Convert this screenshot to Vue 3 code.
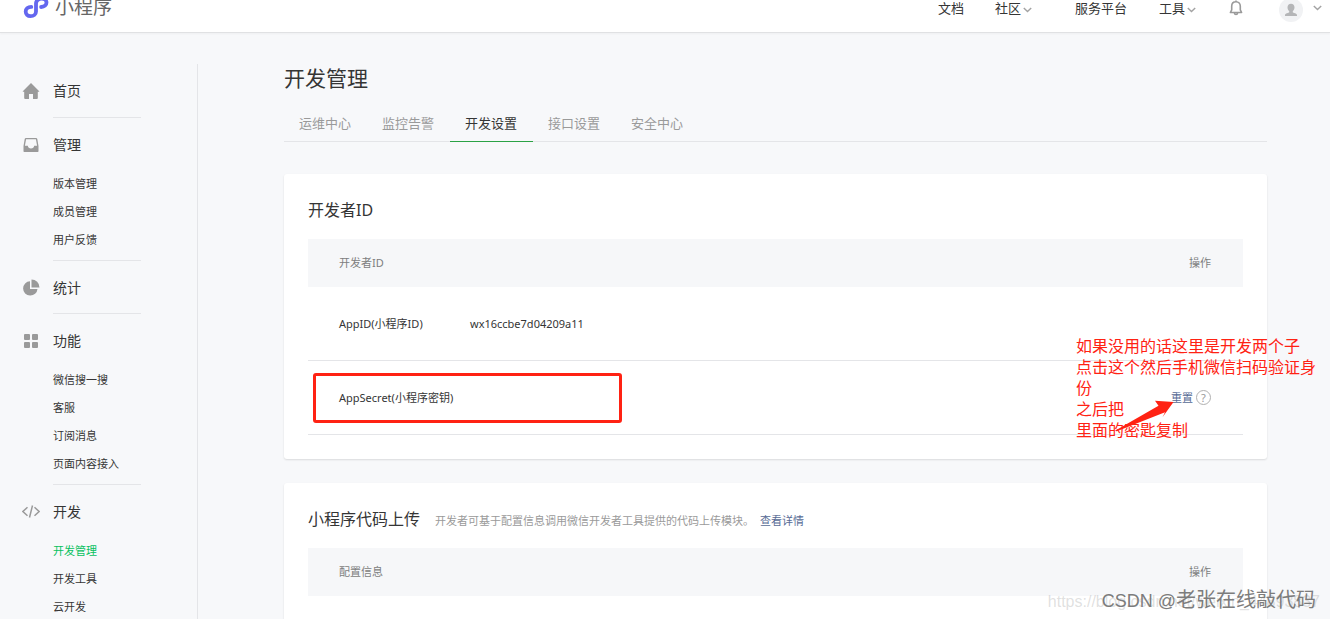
<script setup>
const groups = [
  { title: '首页', icon: 'home', items: [] },
  { title: '管理', icon: 'tray', items: ['版本管理', '成员管理', '用户反馈'] },
  { title: '统计', icon: 'pie', items: [] },
  { title: '功能', icon: 'grid', items: ['微信搜一搜', '客服', '订阅消息', '页面内容接入'] },
  { title: '开发', icon: 'code', items: ['开发管理', '开发工具', '云开发'] },
]
const activeItem = '开发管理'
const tabs = ['运维中心', '监控告警', '开发设置', '接口设置', '安全中心']
const activeTab = '开发设置'
</script>

<template>
  <div class="page">
    <header class="topbar">
      <a class="brand" href="#">
        <svg class="brand-icon" viewBox="0 0 26 20" aria-hidden="true">
          <path d="M8.3 6.9C4.8 6.9 2.700 8.900 2.700 11.600c0 2.600 1.900 4.600 4.800 4.600 3.200 0 5.500-2 5.500-4.800V3.500C13 .7 15.500-1.500 18.700-1.500c2.900 0 4.800 2 4.800 4.100 0 2.400-2 4.300-5.400 4.400" />
        </svg>
        <span>小程序</span>
      </a>
      <nav class="topnav">
        <a class="nav-docs" href="#">文档</a>
        <a class="nav-community" href="#">社区<svg class="chevron" viewBox="0 0 9 6"><path d="M.8.9 4.500 4.600 8.200.9" /></svg></a>
        <a class="nav-platform" href="#">服务平台</a>
        <a class="nav-tools" href="#">工具<svg class="chevron" viewBox="0 0 9 6"><path d="M.8.9 4.500 4.600 8.200.9" /></svg></a>
        <button class="bell" type="button" aria-label="通知">
          <svg viewBox="0 0 14 16"><path d="M7 1.800c-2.700 0-4.300 2-4.300 4.500v3.500L1.400 12.500h11.200l-1.300-2.700V6.300c0-2.500-1.600-4.500-4.300-4.500zM7 .5v1.300M5.300 12.800c.2 1.200.8 1.700 1.700 1.700s1.500-.5 1.700-1.700" /></svg>
        </button>
        <button class="account" type="button" aria-label="账号">
          <svg class="avatar" viewBox="0 0 24 24">
            <circle cx="12" cy="12" r="12" fill="#f1f2f4" />
            <path fill="#b4b5b7" d="M12 5.800c2.200 0 3.500 1.500 3.500 3.600 0 1.500-.7 2.900-1.700 3.600v1.200c.3.700 4.200 1.100 4.200 2.700V18H6v-1.100c0-1.600 3.900-2 4.200-2.700V13c-1-.7-1.700-2.100-1.700-3.600 0-2.100 1.300-3.600 3.500-3.600z" />
          </svg>
          <svg class="chevron" viewBox="0 0 9 6"><path d="M.8.9 4.500 4.600 8.200.9" /></svg>
        </button>
      </nav>
    </header>

    <div class="body">
      <aside class="sidebar">
        <section v-for="g in groups" :key="g.title" class="group">
          <a class="group-title" href="#">
            <svg class="group-icon" viewBox="0 0 18 18" aria-hidden="true">
              <path v-if="g.icon === 'home'" d="M9 1 .8 9.200c-.2.3 0 .6.300.6H2.200V16c0 .6.300 1 .9 1H7v-5h4v5h3.900c.6 0 .9-.4.9-1V9.800h1.100c.3 0 .5-.3.300-.6z" />
              <path v-else-if="g.icon === 'tray'" fill-rule="evenodd" d="M4 2h10c.7 0 1.100.4 1.300 1l1.200 7v5c0 .7-.3 1-1 1h-13c-.7 0-1-.3-1-1v-5l1.200-7C2.900 2.400 3.300 2 4 2zm.1 1.200L2.900 9.700h2.900c.3 1.700 1.400 2.800 3.200 2.800s2.900-1.100 3.200-2.800h2.900l-1.200-6.500z" />
              <template v-else-if="g.icon === 'pie'">
                <path d="M8 2.200V10h7.500A7.200 7.200 0 1 1 8 2.200z" />
                <path d="M9.500.5a8 8 0 0 1 8 8h-8z" />
              </template>
              <template v-else-if="g.icon === 'grid'">
                <rect x="2" y="2" width="6" height="6" rx="1" />
                <rect x="10" y="2" width="6" height="6" rx="1" />
                <rect x="2" y="10" width="6" height="6" rx="1" />
                <rect x="10" y="10" width="6" height="6" rx="1" />
              </template>
              <path v-else class="stroke" d="M5.500 4.300.9 8.500l4.600 4.200M12.500 4.300l4.600 4.200-4.600 4.200M10.500 2.500l-3 12" />
            </svg>
            <span>{{ g.title }}</span>
          </a>
          <ul v-if="g.items.length" class="items">
            <li v-for="i in g.items" :key="i">
              <a href="#" :class="{ active: i === activeItem }">{{ i }}</a>
            </li>
          </ul>
        </section>
      </aside>

      <main class="content">
        <h1>开发管理</h1>
        <nav class="tabs">
          <a v-for="t in tabs" :key="t" href="#" :class="{ active: t === activeTab }">{{ t }}</a>
        </nav>

        <section class="card">
          <h2>开发者ID</h2>
          <table>
            <thead>
              <tr>
                <th colspan="2">开发者ID</th>
                <th class="action">操作</th>
              </tr>
            </thead>
            <tbody>
              <tr>
                <td class="name">AppID(小程序ID)</td>
                <td class="value">wx16ccbe7d04209a11</td>
                <td class="action"></td>
              </tr>
              <tr>
                <td class="name">AppSecret(小程序密钥)</td>
                <td class="value"></td>
                <td class="action">
                  <div class="ops">
                    <a class="link" href="#">重置</a>
                    <button class="help" type="button" aria-label="帮助">?</button>
                  </div>
                </td>
              </tr>
            </tbody>
          </table>
          <div class="highlight"></div>
          <div class="note">
            <p>如果没用的话这里是开发两个子</p>
            <p>点击这个然后手机微信扫码验证身份</p>
            <p>之后把</p>
            <p>里面的密匙复制</p>
          </div>
          <svg class="arrow" viewBox="0 0 60 32" aria-hidden="true">
            <path d="M59.500 2 41 .8l3.500 5L1 30.700q2 1.200 5-.7L51 12.200l-2.500 5z" />
          </svg>
        </section>

        <section class="card">
          <div class="heading">
            <h2>小程序代码上传</h2>
            <p>开发者可基于配置信息调用微信开发者工具提供的代码上传模块。</p>
            <a class="link" href="#">查看详情</a>
          </div>
          <table>
            <thead>
              <tr>
                <th colspan="2">配置信息</th>
                <th class="action">操作</th>
              </tr>
            </thead>
            <tbody>
              <tr>
                <td class="name"></td>
                <td class="value"></td>
                <td class="action"></td>
              </tr>
            </tbody>
          </table>
        </section>
      </main>
    </div>

    <div class="mark-url">https://blog.csdn.net/weixin_44893837</div>
    <div class="mark-author"><span class="mark-site">CSDN @</span>老张在线敲代码</div>
  </div>
</template>

<style>
body {
  margin: 0;
  background: #f7f8fa;
}
</style>

<style scoped>
.page {
  position: relative;
  display: flex;
  flex-direction: column;
  height: 100vh;
  overflow: hidden;
  background: #f7f8fa;
  color: #353535;
  font-family: "Noto Sans", "Noto Sans CJK SC", sans-serif;
  font-size: 11px;
  line-height: 16px;
}
a {
  color: inherit;
  text-decoration: none;
}
button {
  padding: 0;
  border: 0;
  background: none;
  font: inherit;
}
h1, h2, p, ul {
  margin: 0;
  padding: 0;
  font-weight: 400;
}
ul {
  list-style: none;
}
.topbar {
  display: flex;
  justify-content: space-between;
  align-items: flex-start;
  flex: none;
  height: 32px;
  padding: 0 8px 0 23px;
  border-bottom: 1px solid #e0e1e3;
  box-shadow: 0 1px 2px rgba(0, 0, 0, 0.04);
  background: #fff;
}
.brand {
  display: flex;
  gap: 6px;
  color: #666;
  font-size: 19px;
  line-height: 14px;
}
.brand-icon {
  width: 26px;
  height: 20px;
  fill: none;
  stroke: #6467ef;
  stroke-width: 3.8;
  stroke-linecap: round;
}
.topnav {
  display: flex;
  font-size: 13px;
  line-height: 16px;
}
.topnav a {
  white-space: nowrap;
}
.nav-community {
  margin-left: 31px;
}
.nav-platform {
  margin-left: 43px;
}
.nav-tools {
  margin-left: 32px;
}
.chevron {
  width: 9px;
  height: 6px;
  margin-left: 2px;
  fill: none;
  stroke: #a3a3a3;
  stroke-width: 1.4;
}
.bell {
  margin-left: 33px;
  height: 16px;
}
.bell svg {
  display: block;
  width: 14px;
  height: 16px;
  fill: none;
  stroke: #9a9a9a;
  stroke-width: 1.6;
  stroke-linejoin: round;
}
.account {
  display: flex;
  align-items: center;
  gap: 8px;
  height: 16px;
  margin-left: 36px;
}
.avatar {
  width: 24px;
  height: 24px;
  margin-top: 4px;
}
.body {
  display: flex;
  flex: 1;
  min-height: 0;
  padding-top: 31px;
}
.sidebar {
  flex: none;
  box-sizing: border-box;
  width: 198px;
  padding-left: 22px;
  border-right: 1px solid #e4e5e8;
}
.group {
  width: 119px;
}
.group:first-child {
  padding-bottom: 1px;
}
.group-title {
  display: flex;
  align-items: center;
  gap: 13px;
  padding: 14px 0 12px;
  font-size: 14px;
  line-height: 26px;
}
.group + .group::before {
  content: "";
  display: block;
  height: 1px;
  margin-left: 31px;
  background: #e4e5e8;
}
.group-icon {
  width: 18px;
  height: 18px;
  fill: #9a9a9a;
}
.group-icon .stroke {
  fill: none;
  stroke: #9a9a9a;
  stroke-width: 1.5;
}
.items {
  padding: 0 0 6px 31px;
}
.items a {
  display: block;
  line-height: 28px;
  white-space: nowrap;
}
.items .active {
  color: #07c160;
}
.content {
  flex: 1;
  min-width: 0;
  padding: 0 63px 0 86px;
}
h1 {
  font-size: 21px;
  line-height: 28px;
}
.tabs {
  display: flex;
  margin-top: 14px;
  border-bottom: 1px solid #e4e5e8;
  color: #9a9a9a;
  font-size: 13px;
  line-height: 35px;
}
.tabs a {
  margin-bottom: -1px;
  padding: 0 16px 0 15px;
  border-bottom: 1px solid transparent;
}
.tabs .active {
  border-color: #2ba245;
  color: #353535;
}
.card {
  position: relative;
  margin-top: 32px;
  padding: 24px;
  border-radius: 3px;
  background: #fff;
  box-shadow: 0 1px 2px rgba(0, 0, 0, 0.12);
}
.card + .card {
  margin-top: 24px;
}
h2 {
  font-size: 16px;
  line-height: 25px;
}
.heading {
  display: flex;
  align-items: baseline;
}
.heading p {
  margin: 0 6px 0 15px;
  color: #9a9a9a;
}
.link {
  color: #576b95;
}
table {
  width: 100%;
  margin-top: 16px;
  border-collapse: separate;
  border-spacing: 0;
  table-layout: auto;
}
th {
  height: 48px;
  padding: 0 0 0 31px;
  background: #f6f7f9;
  color: #7d7e80;
  font-weight: 400;
  text-align: left;
}
td {
  height: 73px;
  padding: 0;
  border-bottom: 1px solid #e4e5e8;
}
.name {
  width: 131px;
  padding-left: 31px;
  white-space: nowrap;
}
.action {
  width: 120px;
  padding: 0 32px 0 0;
  text-align: right;
}
.ops {
  display: flex;
  justify-content: flex-end;
  align-items: center;
  gap: 3px;
}
.help {
  box-sizing: border-box;
  width: 15px;
  height: 15px;
  border: 1px solid #b0b0b0;
  border-radius: 50%;
  color: #9a9a9a;
  line-height: 13px;
}
.highlight {
  position: absolute;
  top: 199px;
  left: 29px;
  box-sizing: border-box;
  width: 309px;
  height: 50px;
  border: 3px solid #ff2213;
  border-radius: 3px;
}
.note {
  position: absolute;
  top: 162px;
  right: -51px;
  width: 242px;
  color: #ff2213;
  font-size: 16px;
  line-height: 21px;
  pointer-events: none;
}
.arrow {
  position: absolute;
  top: 226px;
  right: 93px;
  width: 60px;
  height: 32px;
  fill: #ff2213;
  pointer-events: none;
}
.mark-url,
.mark-author {
  position: absolute;
  white-space: nowrap;
  font-family: "Liberation Sans", "Noto Sans CJK SC", sans-serif;
  pointer-events: none;
}
.mark-url {
  right: 10px;
  bottom: 7px;
  color: rgba(150, 150, 150, 0.3);
  font-size: 16px;
  line-height: 20px;
}
.mark-author {
  right: 14px;
  bottom: 5px;
  color: #7c7c7c;
  font-size: 20px;
  line-height: 26px;
}
.mark-site {
  font-size: 18px;
}
</style>
